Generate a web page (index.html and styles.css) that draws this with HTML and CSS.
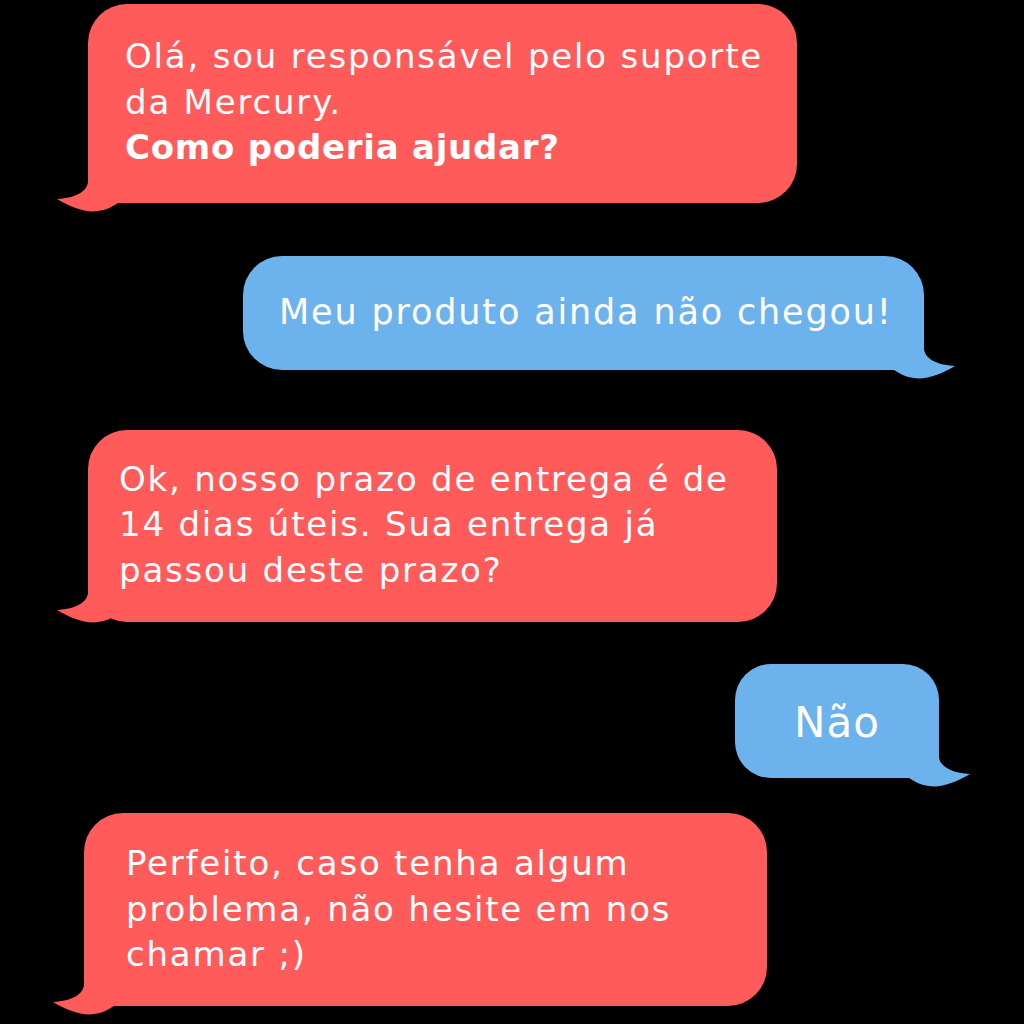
FILE: index.html
```html
<!DOCTYPE html>
<html lang="pt-BR">
<head>
<meta charset="utf-8">
<title>Chat Mercury</title>
<link rel="stylesheet" href="styles.css">
</head>
<body>
<div class="chat">
  <div class="bubble red b1">
    <p class="msg">Olá, sou responsável pelo suporte<br>da Mercury.<br><strong>Como poderia ajudar?</strong></p>
    <svg class="tail tail-left" viewBox="-40 -50 90 70" aria-hidden="true"><path d="M0 -45 L0 -22 C0 -12 -12 -5 -31 -4 C-18 4 -2 10 10 8 C18 7 24 4 30 0 L45 0 L45 -45 Z"/></svg>
  </div>

  <div class="bubble blue b2">
    <p class="msg">Meu produto ainda não chegou!</p>
    <svg class="tail tail-right" viewBox="-40 -50 90 70" aria-hidden="true"><path d="M0 -45 L0 -22 C0 -12 -12 -5 -31 -4 C-18 4 -2 10 10 8 C18 7 24 4 30 0 L45 0 L45 -45 Z"/></svg>
  </div>

  <div class="bubble red b3">
    <p class="msg">Ok, nosso prazo de entrega é de<br>14 dias úteis. Sua entrega já<br>passou deste prazo?</p>
    <svg class="tail tail-left tail-high" viewBox="-40 -50 90 70" aria-hidden="true"><path d="M0 -45 L0 -22 C0 -12 -12 -5 -31 -4 C-18 4 -2 10 10 8 C18 7 24 4 30 0 L45 0 L45 -45 Z"/></svg>
  </div>

  <div class="bubble blue b4">
    <p class="msg">Não</p>
    <svg class="tail tail-right" viewBox="-40 -50 90 70" aria-hidden="true"><path d="M0 -45 L0 -22 C0 -12 -12 -5 -31 -4 C-18 4 -2 10 10 8 C18 7 24 4 30 0 L45 0 L45 -45 Z"/></svg>
  </div>

  <div class="bubble red b5">
    <p class="msg">Perfeito, caso tenha algum<br>problema, não hesite em nos<br>chamar ;)</p>
    <svg class="tail tail-left" viewBox="-40 -50 90 70" aria-hidden="true"><path d="M0 -45 L0 -22 C0 -12 -12 -5 -31 -4 C-18 4 -2 10 10 8 C18 7 24 4 30 0 L45 0 L45 -45 Z"/></svg>
  </div>
</div>
</body>
</html>
```

FILE: styles.css
```css
* {
  box-sizing: border-box;
}

html, body {
  margin: 0;
  padding: 0;
  background: #000000;
}

body {
  width: 1024px;
  height: 1024px;
  overflow: hidden;
  font-family: "DejaVu Sans", "Liberation Sans", sans-serif;
  color: #ffffff;
}

.chat {
  display: flex;
  flex-direction: column;
  align-items: flex-start;
}

.bubble {
  position: relative;
  border-radius: 39px;
}

.msg {
  margin: 0;
  position: relative;
  z-index: 1;
}

.red {
  background: #ff5b5b;
}

.red .tail {
  fill: #ff5b5b;
}

.blue {
  background: #6cb3ee;
  align-self: flex-end;
  display: flex;
  align-items: center;
}

.blue .tail {
  fill: #6cb3ee;
}

.red .msg {
  font-size: 34px;
  line-height: 45.5px;
  letter-spacing: 1.8px;
}

.red .msg strong {
  font-weight: 700;
  letter-spacing: 0.75px;
}

.b1 {
  margin-top: 4px;
  margin-left: 88px;
  width: 709px;
  padding: 30px 10px 32px 37px;
}

.b2 {
  margin-top: 53px;
  margin-right: 100px;
  width: 681px;
  height: 114px;
  padding-left: 36px;
}

.b2 .msg {
  font-size: 35px;
  line-height: 35px;
  letter-spacing: 1.85px;
}

.b3 {
  margin-top: 60px;
  margin-left: 88px;
  width: 689px;
  padding: 27px 10px 29px 31px;
}

.b4 {
  margin-top: 42px;
  margin-right: 85px;
  width: 204px;
  height: 114px;
  justify-content: center;
  padding-top: 3px;
  border-radius: 36px;
}

.b4 .msg {
  font-size: 42px;
  line-height: 42px;
  letter-spacing: 1px;
}

.b5 {
  margin-top: 35px;
  margin-left: 84px;
  width: 683px;
  padding: 28px 10px 28px 42px;
}

.tail {
  position: absolute;
  width: 90px;
  height: 70px;
  top: calc(100% - 50px);
  overflow: visible;
}

.tail-left {
  left: -40px;
}

.tail-right {
  right: -40px;
  transform: scaleX(-1);
}

.tail-high {
  top: calc(100% - 58px);
}
```
